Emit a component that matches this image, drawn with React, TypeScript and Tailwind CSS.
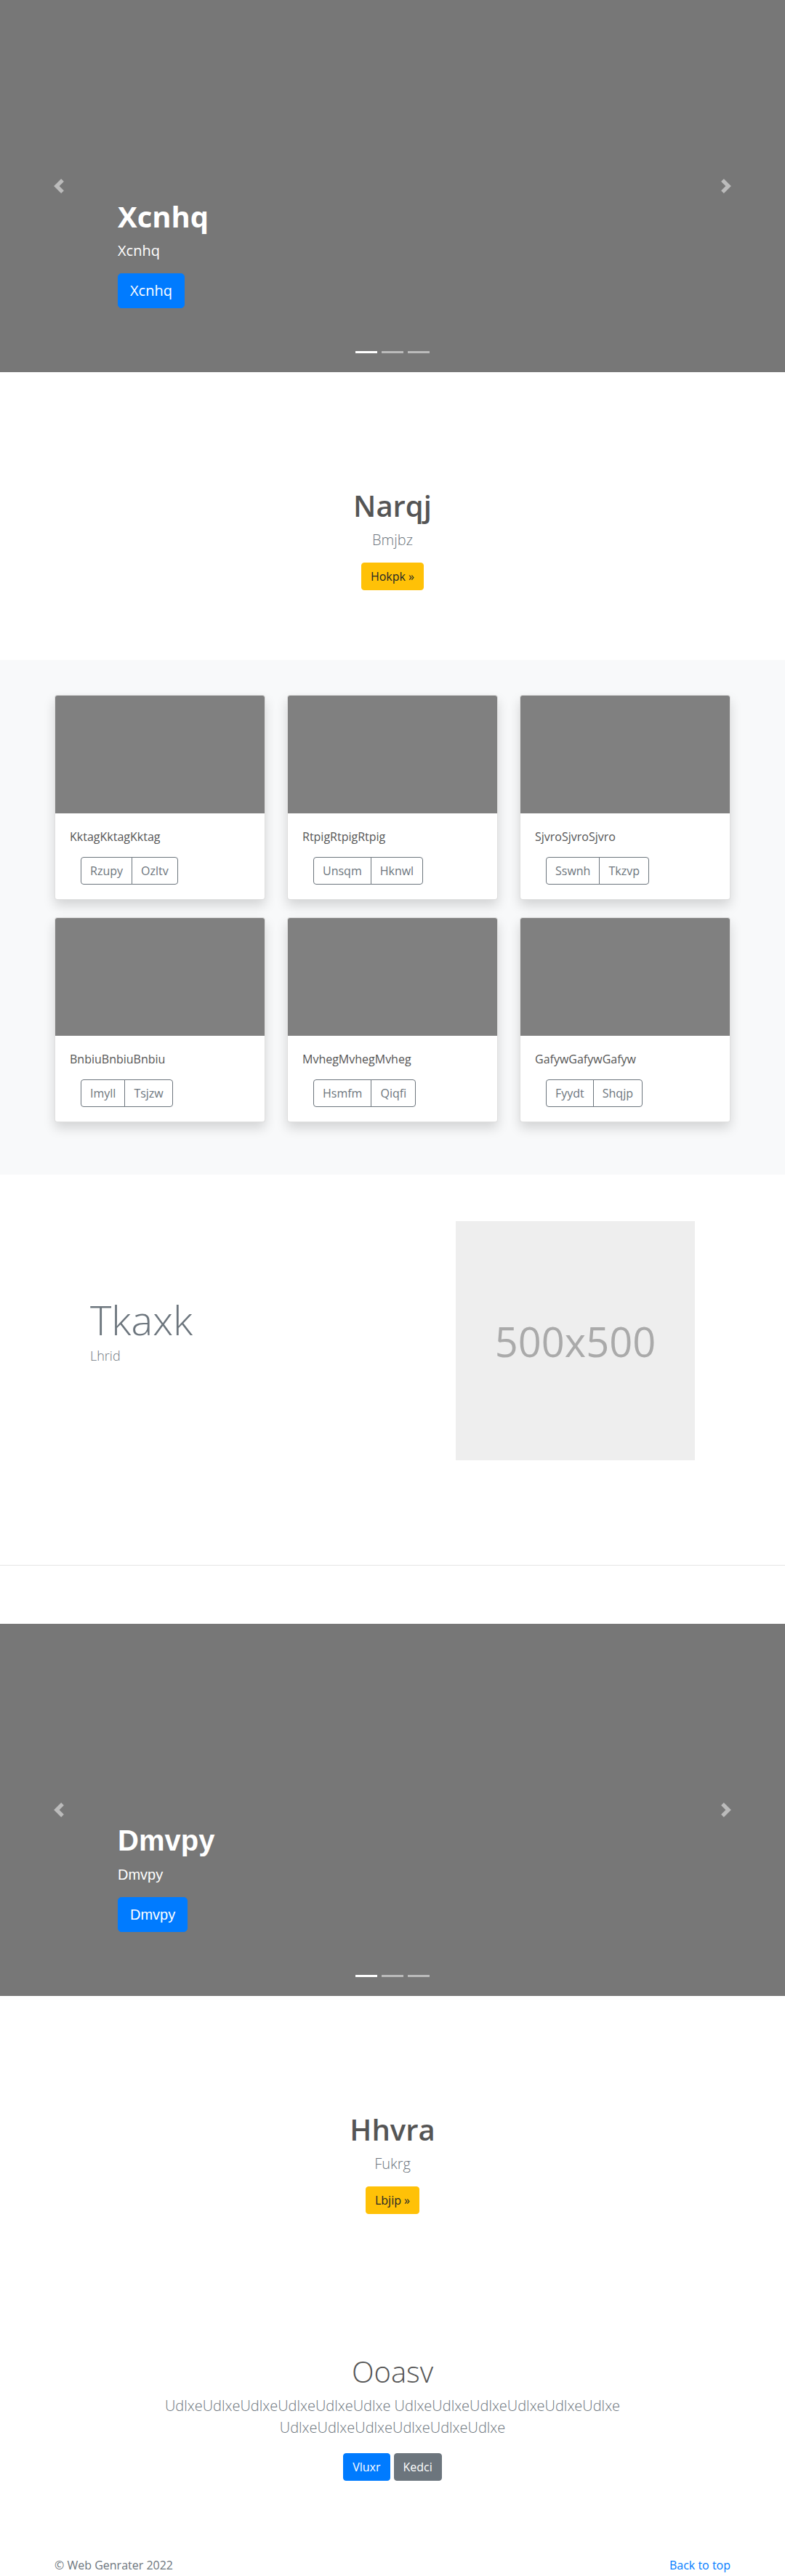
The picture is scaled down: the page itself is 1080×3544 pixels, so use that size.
import React from "react";

const sans = "font-['Open_Sans','Noto_Sans',sans-serif]";
const arial = "font-['Liberation_Sans',Arial,sans-serif]";

const cards = [
  { text: "KktagKktagKktag", a: "Rzupy", b: "Ozltv" },
  { text: "RtpigRtpigRtpig", a: "Unsqm", b: "Hknwl" },
  { text: "SjvroSjvroSjvro", a: "Sswnh", b: "Tkzvp" },
  { text: "BnbiuBnbiuBnbiu", a: "Imyll", b: "Tsjzw" },
  { text: "MvhegMvhegMvheg", a: "Hsmfm", b: "Qiqfi" },
  { text: "GafywGafywGafyw", a: "Fyydt", b: "Shqjp" },
];

function Chevron({ dir }: { dir: "prev" | "next" }) {
  return (
    <svg width="20" height="20" viewBox="0 0 8 8" fill="#fff">
      {dir === "prev" ? (
        <path d="M5.25 0l-4 4 4 4 1.5-1.5L4.25 4l2.5-2.5L5.25 0z" />
      ) : (
        <path d="M2.75 0l-1.5 1.5L3.75 4l-2.5 2.5L2.75 8l4-4-4-4z" />
      )}
    </svg>
  );
}

function Hero({ title, font }: { title: string; font: string }) {
  return (
    <div className={`relative h-[512px] bg-[#777] overflow-hidden ${font}`}>
      {/* controls */}
      <div className="absolute inset-y-0 left-0 w-[15%] flex items-center justify-center opacity-50">
        <Chevron dir="prev" />
      </div>
      <div className="absolute inset-y-0 right-0 w-[15%] flex items-center justify-center opacity-50">
        <Chevron dir="next" />
      </div>

      {/* caption */}
      <div className="absolute left-[15%] right-[15%] bottom-[52px] py-5 text-left text-white">
        <h1 className="text-[40px] leading-[1.2] font-bold mb-2">{title}</h1>
        <p className="text-xl leading-[1.5] mb-4">{title}</p>
        <p className="mb-4">
          <a className="inline-block bg-[#007bff] border border-[#007bff] rounded-[5px] px-4 py-2 text-xl leading-[1.5] text-white">
            {title}
          </a>
        </p>
      </div>

      {/* indicators */}
      <div className="absolute bottom-[26px] left-0 right-0 flex justify-center gap-1.5">
        <span className="w-[30px] h-[3px] bg-white" />
        <span className="w-[30px] h-[3px] bg-white/50" />
        <span className="w-[30px] h-[3px] bg-white/50" />
      </div>
    </div>
  );
}

function Callout({ title, sub, btn }: { title: string; sub: string; btn: string }) {
  return (
    <section className="pt-[160px] pb-[80px] text-center">
      <h1 className="text-[40px] leading-[1.2] font-semibold text-[#555] mb-2">{title}</h1>
      <p className="text-xl leading-[1.5] font-light text-[#6c757d] mb-4">{sub}</p>
      <p className="mb-4">
        <a className="inline-block bg-[#ffc107] border border-[#ffc107] rounded px-3 py-1.5 text-base leading-6 text-[#212529]">
          {btn}
        </a>
      </p>
    </section>
  );
}

export default function App() {
  return (
    <div className={`bg-white ${sans}`}>
      <Hero title="Xcnhq" font={sans} />

      <Callout title="Narqj" sub="Bmjbz" btn="Hokpk »" />

      {/* Album */}
      <section className="bg-[#f8f9fa] py-12">
        <div className="w-[930px] mx-auto grid grid-cols-3 gap-x-[30px]">
          {cards.map((c) => (
            <div
              key={c.text}
              className="mb-6 bg-white border border-black/[.125] rounded overflow-hidden shadow-[0_8px_16px_rgba(0,0,0,0.15)]"
            >
              <div className="h-[162px] bg-[#808080]" />
              <div className="p-5">
                <p className="text-base leading-6 text-[#555] mb-4">{c.text}</p>
                <div className="ml-[15px] inline-flex">
                  <button className="px-3 py-1.5 text-base leading-6 text-[#6c757d] border border-[#6c757d] rounded-l">
                    {c.a}
                  </button>
                  <button className="-ml-px px-3 py-1.5 text-base leading-6 text-[#6c757d] border border-[#6c757d] rounded-r">
                    {c.b}
                  </button>
                </div>
              </div>
            </div>
          ))}
        </div>
      </section>

      {/* Featurette */}
      <section className="pt-[64px] pb-[144px] px-[124px] flex">
        <div className="flex-1 pt-[102px]">
          <h2 className="text-[56px] leading-[1.2] font-light text-[#6c757d] mb-1">Tkaxk</h2>
          <p className="text-lg leading-6 font-light text-[#6c757d]">Lhrid</p>
        </div>
        <div className="w-[329px] h-[329px] bg-[#eee] flex items-center justify-center">
          <span className="text-[56px] text-[#aaa] leading-none">500x500</span>
        </div>
      </section>
      <hr className="border-0 border-t border-black/10" />
      <div className="h-[80px]" />

      <Hero title="Dmvpy" font={arial} />

      <Callout title="Hhvra" sub="Fukrg" btn="Lbjip »" />

      {/* Jumbotron */}
      <section className="pt-[97px] text-center">
        <h1 className="text-[40px] leading-[1.2] font-light text-[#555] mb-2">Ooasv</h1>
        <p className="mx-auto w-[700px] text-xl leading-[1.5] font-light text-[#6c757d] mb-4">
          UdlxeUdlxeUdlxeUdlxeUdlxeUdlxe UdlxeUdlxeUdlxeUdlxeUdlxeUdlxe UdlxeUdlxeUdlxeUdlxeUdlxeUdlxe
        </p>
        <p className="mt-[20px] flex justify-center gap-[5px]">
          <a className="inline-block bg-[#007bff] border border-[#007bff] rounded px-3 py-1.5 text-base leading-6 text-white">
            Vluxr
          </a>
          <a className="inline-block bg-[#6c757d] border border-[#6c757d] rounded px-3 py-1.5 text-base leading-6 text-white">
            Kedci
          </a>
        </p>
      </section>

      <footer className="pt-[104px] pb-12 text-[#6c757d]">
        <div className="w-[930px] mx-auto flex justify-between text-base leading-6">
          <p>© Web Genrater 2022</p>
          <a className="text-[#007bff]">Back to top</a>
        </div>
      </footer>
    </div>
  );
}
